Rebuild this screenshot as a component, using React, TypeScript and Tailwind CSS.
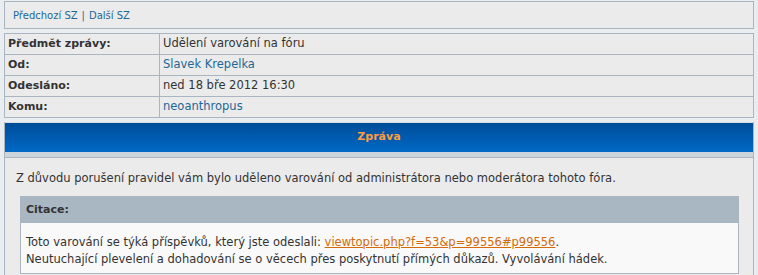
export default function App() {
  const rows = [
    { label: "Předmět zprávy:", value: "Udělení varování na fóru", link: false },
    { label: "Od:", value: "Slavek Krepelka", link: true },
    { label: "Odesláno:", value: "ned 18 bře 2012 16:30", link: false },
    { label: "Komu:", value: "neoanthropus", link: true },
  ];

  return (
    <div
      className="w-[758px] h-[275px] overflow-hidden bg-[#e9edf0] px-[4px] pt-[1px] text-[#333] text-[11px]"
      style={{ fontFamily: '"DejaVu Sans", Verdana, sans-serif' }}
    >
      {/* navigation */}
      <div className="h-[28px] flex items-center border border-[#a9b6c2] bg-[#ebebeb] pl-[8px] text-[10px]">
        <a className="text-[#1d6896]">Předchozí SZ</a>
        <span className="mx-[4px] text-[#1d6896]">|</span>
        <a className="text-[#1d6896]">Další SZ</a>
      </div>

      {/* header table */}
      <table className="mt-[4px] w-full border-collapse">
        <tbody>
          {rows.map((r) => (
            <tr key={r.label} className="h-[21px]">
              <td className="w-[155px] border border-[#a9b6c2] bg-[#ebebeb] pl-[3px] font-bold text-[#333]">
                {r.label}
              </td>
              <td
                className={`border border-[#a9b6c2] bg-[#ebebeb] pl-[3px] text-[11.5px] ${
                  r.link ? "text-[#1d6896]" : "text-[#333]"
                }`}
              >
                {r.value}
              </td>
            </tr>
          ))}
        </tbody>
      </table>

      {/* message */}
      <div className="mt-[4px] border-x border-[#a9b6c2]">
        <div className="h-[30px] flex items-center justify-center border-t border-[#d6dde3] bg-gradient-to-b from-[#004d98] to-[#0069c6] font-bold text-[#ff9d3c]">
          Zpráva
        </div>
        <div className="h-[6px] bg-[#ccd4dc] border-b border-[#a9b6c2]" />
        <div className="bg-[#ebebeb] px-[11px] pt-[12px] pb-[10px]">
          <p className="text-[11.5px] leading-[17px]">
            Z důvodu porušení pravidel vám bylo uděleno varování od administrátora nebo moderátora tohoto fóra.
          </p>
          <div className="mt-[9px] ml-[4px] mr-[3px] border border-[#aab5bf]">
            <div className="h-[26px] flex items-center bg-[#a9b7c3] pl-[5px] text-[11px] font-bold text-[#333]">
              Citace:
            </div>
            <div className="bg-[#f9f9fa] px-[5px] pt-[11px] pb-[5px] leading-[17px] text-[11.5px]">
              Toto varování se týká příspěvků, který jste odeslali:{" "}
              <a className="text-[#d46b08] underline">viewtopic.php?f=53&amp;p=99556#p99556</a>.
              <br />
              Neutuchající plevelení a dohadování se o věcech přes poskytnutí přímých důkazů. Vyvolávání hádek.
            </div>
          </div>
        </div>
      </div>
    </div>
  );
}
